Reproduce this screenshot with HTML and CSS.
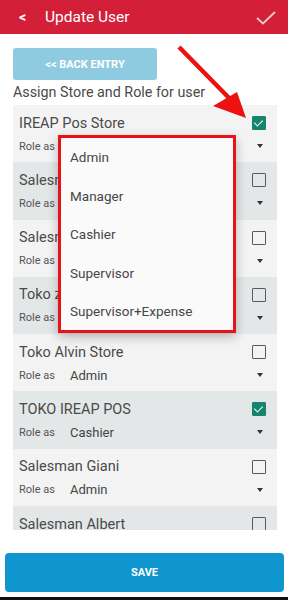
FILE: index.html
```html
<!DOCTYPE html>
<html lang="id">
<head>
    <meta charset="UTF-8">
    <meta name="viewport" content="width=device-width, initial-scale=1.0">
    <title>Update User</title>
    <link rel="stylesheet" href="styles.css">
</head>
<body>
    <div class="screen">
        <div class="header">
            <span class="back">&lt;</span>
            <span class="title">Update User</span>
            <svg class="done" width="20" height="14" viewBox="0 0 20 14">
                <path d="M1 7 L7 12.5 L19 1" fill="none" stroke="#f6c9cf" stroke-width="1.8"/>
            </svg>
        </div>

        <div class="content">
            <div class="back-entry">&lt;&lt; BACK ENTRY</div>
            <div class="assign">Assign Store and Role for user</div>

            <div class="list">
                <div class="row">
                    <div class="line"><span class="name">IREAP Pos Store</span><span class="box checked"></span></div>
                    <div class="line"><span class="role">Role as</span><span class="value"></span><span class="caret"></span></div>
                </div>
                <div class="row alt">
                    <div class="line"><span class="name">Salesm</span><span class="box"></span></div>
                    <div class="line"><span class="role">Role as</span><span class="value"></span><span class="caret"></span></div>
                </div>
                <div class="row">
                    <div class="line"><span class="name">Salesm</span><span class="box"></span></div>
                    <div class="line"><span class="role">Role as</span><span class="value"></span><span class="caret"></span></div>
                </div>
                <div class="row alt">
                    <div class="line"><span class="name">Toko zi</span><span class="box"></span></div>
                    <div class="line"><span class="role">Role as</span><span class="value"></span><span class="caret"></span></div>
                </div>
                <div class="row">
                    <div class="line"><span class="name">Toko Alvin Store</span><span class="box"></span></div>
                    <div class="line"><span class="role">Role as</span><span class="value">Admin</span><span class="caret"></span></div>
                </div>
                <div class="row alt">
                    <div class="line"><span class="name">TOKO IREAP POS</span><span class="box checked"></span></div>
                    <div class="line"><span class="role">Role as</span><span class="value">Cashier</span><span class="caret"></span></div>
                </div>
                <div class="row">
                    <div class="line"><span class="name">Salesman Giani</span><span class="box"></span></div>
                    <div class="line"><span class="role">Role as</span><span class="value">Admin</span><span class="caret"></span></div>
                </div>
                <div class="row alt">
                    <div class="line"><span class="name">Salesman Albert</span><span class="box"></span></div>
                </div>
            </div>
        </div>

        <div class="footer">
            <div class="save">SAVE</div>
        </div>
        <div class="bottom-bar"></div>

        <!-- role dropdown, opened over the first row -->
        <div class="dropdown">
            <div class="option">Admin</div>
            <div class="option">Manager</div>
            <div class="option">Cashier</div>
            <div class="option">Supervisor</div>
            <div class="option">Supervisor+Expense</div>
        </div>

        <!-- annotation arrow -->
        <svg class="arrow" width="288" height="140" viewBox="0 0 288 140">
            <line x1="179" y1="47" x2="232" y2="101" stroke="#ee1111" stroke-width="4.5"/>
            <polygon points="246,118 213,106 237,92" fill="#ee1111"/>
        </svg>
    </div>
</body>
</html>
```

FILE: styles.css
```css
* {
    margin: 0;
    padding: 0;
    box-sizing: border-box;
}

body {
    font-family: Roboto, 'Noto Sans', sans-serif;
    background: #fff;
    color: #444;
}

.screen {
    position: relative;
    width: 288px;
    height: 600px;
    display: flex;
    flex-direction: column;
    overflow: hidden;
}

.header {
    height: 34px;
    background: #d31f38;
    color: #fff;
    display: flex;
    align-items: center;
    padding: 0 12px 0 19px;
}

.back {
    font-size: 14px;
    font-weight: 700;
    width: 26px;
}

.title {
    font-size: 15.5px;
    flex: 1;
}

.done {
    margin-top: 1px;
}

.content {
    padding: 14px 11px 0 13px;
}

.back-entry {
    width: 144px;
    height: 32px;
    background: #8fcbe0;
    border-radius: 3px;
    color: #fff;
    font-size: 11px;
    font-weight: 700;
    display: flex;
    align-items: center;
    justify-content: center;
}

.assign {
    font-size: 14.3px;
    color: #4a4a4a;
    line-height: 25px;
    height: 25px;
}

.list {
    height: 425px;
    overflow: hidden;
}

.row {
    height: 57.3px;
    background: #f3f3f3;
    padding: 7px 10px 0 6px;
}

.row.alt {
    background: #e4e7e7;
}

.line {
    display: flex;
    align-items: center;
    height: 22px;
}

.line + .line {
    margin-top: 1px;
}

.name {
    flex: 1;
    font-size: 14.5px;
    color: #4a4a4a;
}

.role {
    font-size: 11px;
    color: #555;
    width: 51px;
}

.value {
    flex: 1;
    font-size: 13px;
    color: #444;
}

.box {
    width: 14px;
    height: 14px;
    border: 1.6px solid #5a5a5a;
    border-radius: 1px;
    position: relative;
    margin-right: 1px;
}

.box.checked {
    background: #168570;
    border-color: #168570;
}

.box.checked::after {
    content: "";
    position: absolute;
    left: 3px;
    top: 1px;
    width: 4px;
    height: 7px;
    border: solid #fff;
    border-width: 0 1.6px 1.6px 0;
    transform: rotate(45deg);
}

.caret {
    width: 0;
    height: 0;
    border-left: 3.5px solid transparent;
    border-right: 3.5px solid transparent;
    border-top: 4px solid #333;
    margin-right: 4px;
}

.footer {
    margin-top: auto;
    padding: 0 4px 5px 5px;
}

.save {
    height: 39px;
    background: #0f96cf;
    border-radius: 4px;
    color: #fff;
    font-size: 11px;
    font-weight: 700;
    display: flex;
    align-items: center;
    justify-content: center;
}

.bottom-bar {
    height: 3px;
    background: #111;
}

.dropdown {
    position: absolute;
    left: 58px;
    top: 135px;
    width: 178px;
    height: 198px;
    background: #fafafa;
    border: 3px solid #e81219;
    box-shadow: 0 4px 10px rgba(0, 0, 0, 0.25);
}

.option {
    height: 38.5px;
    display: flex;
    align-items: center;
    padding-left: 9px;
    font-size: 13.5px;
    color: #474747;
}

.arrow {
    position: absolute;
    left: 0;
    top: 0;
}
```
